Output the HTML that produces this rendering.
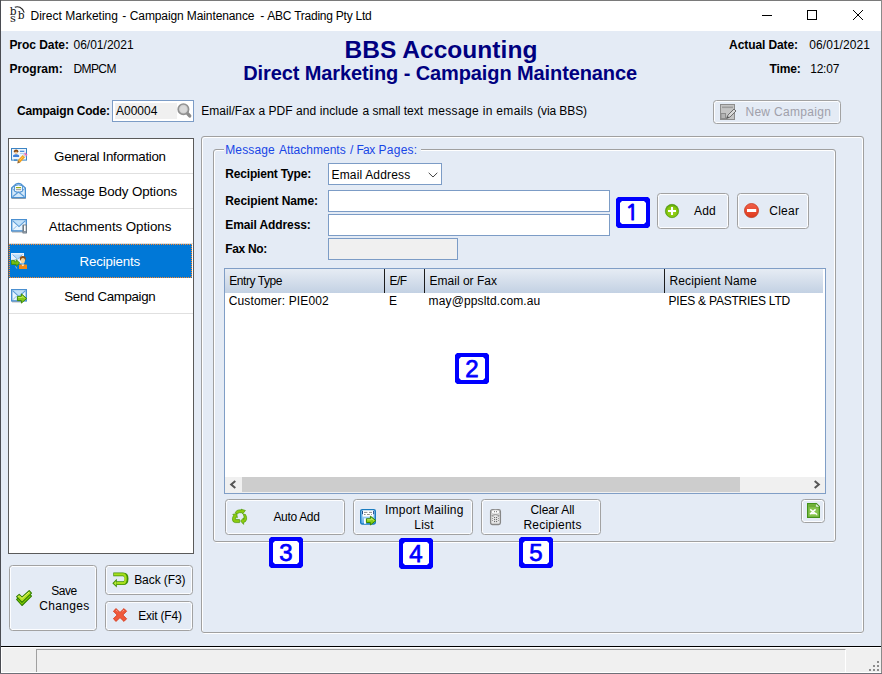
<!DOCTYPE html>
<html>
<head>
<meta charset="utf-8">
<title>Direct Marketing - Campaign Maintenance - ABC Trading Pty Ltd</title>
<style>
*{box-sizing:border-box;margin:0;padding:0}
html,body{width:882px;height:674px;overflow:hidden;background:#e4ebf5;font-family:"Liberation Sans",sans-serif;font-size:12px;color:#000}
#win{position:absolute;left:0;top:0;width:882px;height:674px;background:#e4ebf5;overflow:hidden}
.a{position:absolute}
.t{position:absolute;white-space:nowrap}
svg{position:absolute;overflow:visible}
.btn{position:absolute;border:1px solid #a2a2a2;border-radius:3.5px;background:#e4ebf5;box-shadow:inset 0 0 0 1px #fcfdff}
.inp{position:absolute;background:#fff;border:1px solid #7c9cc6}
.badge{position:absolute;width:34px;height:31px;background:#0000ff;clip-path:polygon(2px 0,32px 0,34px 2px,34px 29px,32px 31px,2px 31px,0 29px,0 2px)}
.badge i{position:absolute;left:4px;top:4px;width:26px;height:23px;background:#fff;clip-path:polygon(2px 0,24px 0,26px 2px,26px 21px,24px 23px,2px 23px,0 21px,0 2px)}
.badge b{position:absolute;left:4px;top:4px;width:26px;height:23px;text-align:center;font-size:24px;line-height:23px;color:#0000ff;font-weight:normal;-webkit-text-stroke:0.75px #0000ff}
.nav{position:absolute;left:9px;width:184px;height:34px;background:#fff;border-bottom:1px solid #e0e0e0;box-sizing:content-box}
.etch{position:absolute;border:1px solid #a0a0a0;border-radius:3px}

</style>
</head>
<body>
<div id="win">
<!-- window frame + title bar -->
<div class="a" style="left:0;top:0;width:882px;height:31px;background:#fff"></div>
<div class="a" style="left:0;top:0;width:882px;height:1px;background:#7a7a7a"></div>
<div class="a" style="left:0;top:0;width:1px;height:674px;background:#4a4c52"></div>
<div class="a" style="left:881px;top:0;width:1px;height:674px;background:#8a8a8a"></div>
<!-- app icon -->
<svg style="left:9px;top:5px" width="17" height="18" viewBox="0 0 17 18">
  <g font-family="DejaVu Serif, serif" fill="#111">
    <text x="0.8" y="9.6" font-size="10.6">b</text>
    <text x="1" y="16.8" font-size="11.4">s</text>
    <text x="8.8" y="14.1" font-size="10.6">b</text>
  </g>
  <path d="M5.8 2.3 C8.6 0.9 13.4 2 15.2 7.6" fill="none" stroke="#222" stroke-width="1.1"/>
</svg>
<!-- window controls -->
<svg style="left:0;top:0" width="882" height="31" viewBox="0 0 882 31" shape-rendering="crispEdges">
  <rect x="762" y="15" width="10" height="1" fill="#000"/>
  <rect x="807.5" y="10.5" width="9" height="9" fill="none" stroke="#000" stroke-width="1"/>
  <path d="M853 10 L863 20 M863 10 L853 20" stroke="#000" stroke-width="1" fill="none" shape-rendering="auto"/>
</svg>

<!-- campaign code input -->
<div class="inp" style="left:112px;top:100px;width:82px;height:22px"></div>
<div class="a" style="left:115px;top:103px;width:62px;height:16px;background:#f0f0f0"></div>
<svg style="left:177px;top:102px" width="16" height="18" viewBox="0 0 16 18">
  <line x1="10.6" y1="11.6" x2="12.7" y2="13.9" stroke="#8c8c8c" stroke-width="3.4" stroke-linecap="round"/>
  <circle cx="6.4" cy="7.2" r="5.2" fill="#d0d0d0" stroke="#929292" stroke-width="1.7"/>
  <circle cx="6.4" cy="7.2" r="3.2" fill="#dadada"/>
</svg>

<!-- New Campaign (disabled) -->
<div class="btn" style="left:713px;top:100px;width:128px;height:24px"></div>
<svg style="left:720px;top:104px" width="16" height="16" viewBox="0 0 16 16">
  <rect x="0.5" y="0.5" width="14" height="15" fill="#c4c4c4" stroke="#8c8c8c"/>
  <rect x="2" y="2.5" width="11" height="1.6" fill="#9c9c9c"/>
  <rect x="1" y="9.5" width="4.5" height="5" fill="#b4b4b4" stroke="#8c8c8c"/>
  <path d="M6.5 14.5 L8 11 L14 5 L16 7 L10 13 Z" fill="#d8d8d8" stroke="#6e6e6e" stroke-width="1"/>
  <path d="M6.5 14.5 L7.6 12 L9.2 13.6 Z" fill="#555"/>
</svg>

<!-- sidebar list -->
<div class="a" style="left:8px;top:138px;width:186px;height:416px;background:#fff;border:1px solid #5a5a5a"></div>
<div class="nav" style="top:139px"></div>
<div class="nav" style="top:174px"></div>
<div class="nav" style="top:209px"></div>
<div class="nav" style="top:279px"></div>
<div class="a" style="left:9px;top:244px;width:183px;height:34px;background:#0078d7"></div>
<div class="a" style="left:9px;top:244px;width:183px;height:1px;background:repeating-linear-gradient(90deg,#ff8728 0 1px,transparent 1px 2px)"></div>
<div class="a" style="left:9px;top:277px;width:183px;height:1px;background:repeating-linear-gradient(90deg,transparent 0 1px,#ff8728 1px 2px)"></div>
<div class="a" style="left:9px;top:244px;width:1px;height:34px;background:repeating-linear-gradient(180deg,#ff8728 0 1px,transparent 1px 2px)"></div>
<div class="a" style="left:191px;top:244px;width:1px;height:34px;background:repeating-linear-gradient(180deg,#ff8728 0 1px,transparent 1px 2px)"></div>

<!-- outer panel (etched) -->
<div class="etch" style="left:202px;top:137px;width:661px;height:497px;border-color:#fff"></div>
<div class="etch" style="left:201px;top:136px;width:663px;height:497px"></div>
<!-- group box -->
<div class="etch" style="left:214px;top:150px;width:621px;height:393px;border-color:#fff"></div>
<div class="etch" style="left:213px;top:149px;width:623px;height:393px"></div>
<div class="a" style="left:224px;top:146px;width:197px;height:8px;background:#e4ebf5"></div>

<!-- form fields -->
<div class="inp" style="left:328px;top:163px;width:114px;height:22px"></div>
<svg style="left:428px;top:172px" width="10" height="6" viewBox="0 0 10 6"><path d="M0.7 0.8 L5 5 L9.3 0.8" fill="none" stroke="#444" stroke-width="1"/></svg>
<div class="inp" style="left:328px;top:190px;width:282px;height:22px"></div>
<div class="inp" style="left:328px;top:214px;width:282px;height:22px"></div>
<div class="inp" style="left:328px;top:238px;width:130px;height:22px;background:#f0f0f0"></div>

<!-- badge 1 + Add / Clear -->
<div class="badge" style="left:616px;top:197px"><i></i><b style="font-family:NanumGothic,'Liberation Sans',sans-serif;font-size:22px;-webkit-text-stroke:1.1px #0000ff;top:4px;left:3px">1</b></div>
<div class="btn" style="left:657px;top:193px;width:72px;height:36px"></div>
<div class="btn" style="left:737px;top:193px;width:72px;height:36px"></div>

<!-- grid -->
<div class="a" style="left:224px;top:268px;width:602px;height:226px;background:#fff;border:1px solid #809ec6"></div>
<div class="a" style="left:225px;top:269px;width:598px;height:24px;background:linear-gradient(#e6ecf4,#c3d1e3)"></div>
<div class="a" style="left:384px;top:269px;width:1px;height:24px;background:#1c1c1c"></div>
<div class="a" style="left:424px;top:269px;width:1px;height:24px;background:#1c1c1c"></div>
<div class="a" style="left:664px;top:269px;width:1px;height:24px;background:#1c1c1c"></div>
<!-- scrollbar -->
<div class="a" style="left:225px;top:477px;width:600px;height:16px;background:#f0f0f0"></div>
<div class="a" style="left:242px;top:477px;width:498px;height:15px;background:#cdcdcd"></div>
<svg style="left:229px;top:480px" width="8" height="9" viewBox="0 0 8 9"><path d="M6.3 1 L2.2 4.5 L6.3 8" fill="none" stroke="#555" stroke-width="2"/></svg>
<svg style="left:813px;top:480px" width="8" height="9" viewBox="0 0 8 9"><path d="M1.7 1 L5.8 4.5 L1.7 8" fill="none" stroke="#555" stroke-width="2"/></svg>

<div class="badge" style="left:455px;top:353px"><i></i><b>2</b></div>

<!-- bottom buttons -->
<div class="btn" style="left:225px;top:499px;width:120px;height:36px"></div>
<div class="btn" style="left:353px;top:499px;width:120px;height:36px"></div>
<div class="btn" style="left:481px;top:499px;width:120px;height:36px"></div>
<div class="btn" style="left:801px;top:499px;width:24px;height:24px"></div>

<div class="badge" style="left:269px;top:537px"><i></i><b>3</b></div>
<div class="badge" style="left:399px;top:538px"><i></i><b>4</b></div>
<div class="badge" style="left:519px;top:537px"><i></i><b>5</b></div>

<!-- bottom-left buttons -->
<div class="btn" style="left:9px;top:565px;width:88px;height:66px"></div>
<div class="btn" style="left:105px;top:565px;width:88px;height:30px"></div>
<div class="btn" style="left:105px;top:601px;width:88px;height:30px"></div>

<!-- status bar -->
<div class="a" style="left:1px;top:646px;width:880px;height:1px;background:#000"></div>
<div class="a" style="left:1px;top:647px;width:880px;height:26px;background:#f0f0f0;border-top:1px solid #fff;border-left:1px solid #fff;border-bottom:1px solid #fff"></div>
<div class="a" style="left:36px;top:649px;width:810px;height:23px;border-top:1px solid #a0a0a0;border-left:1px solid #a0a0a0;border-right:1px solid #fff"></div>
<div class="a" style="left:0;top:673px;width:882px;height:1px;background:#6e7078"></div>
<svg style="left:868px;top:660px" width="12" height="12" viewBox="0 0 12 12" shape-rendering="crispEdges">
  <g fill="#8c8c8c"><rect x="9" y="1" width="2" height="2"/><rect x="5" y="5" width="2" height="2"/><rect x="9" y="5" width="2" height="2"/><rect x="1" y="9" width="2" height="2"/><rect x="5" y="9" width="2" height="2"/><rect x="9" y="9" width="2" height="2"/></g>
</svg>

<!-- ===== icons ===== -->
<!-- nav 1: id card + pencil -->
<svg style="left:11px;top:148px" width="16" height="16" viewBox="0 0 16 16">
  <rect x="0.5" y="0.5" width="15" height="11.6" fill="#edf5fc" stroke="#3c84c4"/>
  <rect x="3" y="11.4" width="3.2" height="1.4" fill="#3c84c4"/>
  <ellipse cx="5.1" cy="3.3" rx="2.2" ry="1.7" fill="#8a4a12"/>
  <ellipse cx="5.1" cy="4.9" rx="1.3" ry="1.5" fill="#f3cb9c"/>
  <path d="M2.1 9 V7.2 Q5.1 5.4 8.1 7.2 V9 Z" fill="#3f7fd8"/>
  <rect x="9" y="2.7" width="4.3" height="1.3" fill="#4a8fdc"/>
  <rect x="9" y="5" width="4.3" height="1" fill="#b4d4f2"/>
  <line x1="8" y1="13.4" x2="12.9" y2="8.2" stroke="#f5a21c" stroke-width="3.3"/>
  <line x1="8.6" y1="12.4" x2="12.3" y2="8.5" stroke="#fcc65a" stroke-width="1"/>
  <path d="M6.3 15.6 L6.9 12.3 L9.3 14.6 Z" fill="#9a6a30"/>
  <line x1="12.9" y1="8.2" x2="14.2" y2="6.8" stroke="#cfd3d8" stroke-width="3.3"/>
  <line x1="14.2" y1="6.8" x2="15.3" y2="5.6" stroke="#e66cc0" stroke-width="3.3"/>
</svg>
<!-- nav 2: open envelope -->
<svg style="left:11px;top:183px" width="15" height="16" viewBox="0 0 15 16">
  <rect x="0.6" y="15" width="14.2" height="1" fill="#a3a3a3"/>
  <path d="M0.6 5 L5 1 Q7.5 -0.3 10 1 L14.4 5 V14.6 H0.6 Z" fill="#d4e9fa" stroke="#4a8fd0" stroke-width="1.2"/>
  <path d="M3.6 2.6 Q7.5 1.2 11.4 2.6 V8.4 Q7.5 10.2 3.6 8.4 Z" fill="#fff" stroke="#4a8fd0" stroke-width="1"/>
  <rect x="5" y="4.1" width="5" height="1.1" fill="#8aa400"/>
  <rect x="5" y="6.1" width="5" height="1.1" fill="#9a9a9a"/>
  <path d="M1.2 5.6 L5.6 9.6 M13.8 5.6 L9.4 9.6" stroke="#5a9ad6" stroke-width="1" fill="none"/>
  <path d="M1.6 13.8 L7.5 9 L13.4 13.8" stroke="#5a9ad6" stroke-width="1.1" fill="none"/>
</svg>
<!-- nav 3: envelope + clip -->
<svg style="left:11px;top:219px" width="16" height="15" viewBox="0 0 16 15">
  <rect x="1" y="12.2" width="11" height="1.3" fill="#a8a8a8"/>
  <rect x="0.7" y="0.7" width="14.6" height="11.2" fill="#e8f4fe" stroke="#4a8fd0" stroke-width="1.4"/>
  <path d="M1.8 1.6 H14.2 L8 7.4 Z" fill="#bfe0fa"/>
  <path d="M1.8 1.8 L8 7.6 L14.2 1.8" stroke="#5a9ad6" stroke-width="1.1" fill="none"/>
  <path d="M1.8 10.8 L5.6 7 " stroke="#8cbce8" stroke-width="1" fill="none"/>
  <rect x="11.4" y="5.4" width="4.6" height="9.2" rx="1.2" fill="#6f7c88"/>
  <rect x="13" y="6.4" width="1.7" height="5.6" fill="#fff"/>
  <rect x="12.4" y="12.6" width="2.6" height="0.9" fill="#aeb6be"/>
</svg>
<!-- nav 4: recipients -->
<svg style="left:11px;top:253px" width="17" height="16" viewBox="0 0 17 16">
  <rect x="0.5" y="0.5" width="12" height="9.5" fill="#e4f1fc" stroke="#e8f0fa"/>
  <path d="M1.5 1.5 H11.5 L6.5 6 Z" fill="#b8dcfa"/>
  <path d="M1.5 1.5 L6.5 6.2 L11.5 1.5" stroke="#7fb0e4" stroke-width="1" fill="none"/>
  <path d="M1.5 9 L4.5 6" stroke="#a8cdf0" stroke-width="1" fill="none"/>
  <path d="M0.4 7.4 H3.4 V8.8 H5.2 V6.6 L8.6 10 L5.2 13.4 V11.4 H0.4 Z" fill="#78c010" stroke="#3a8a08" stroke-width="0.9"/>
  <path d="M4.6 13.2 L5.8 15.6" stroke="#b8c8d8" stroke-width="0.8"/>
  <ellipse cx="11.8" cy="5.6" rx="3" ry="2.6" fill="#8c4c10"/>
  <ellipse cx="11.9" cy="7.6" rx="2.1" ry="2.7" fill="#f2d29c"/>
  <path d="M8 16 V12 Q8 11.4 8.8 11.4 H15.2 Q16 11.4 16 12 V16 Z" fill="#f08a18"/>
  <path d="M10.4 11.4 L11.9 13.2 L13.4 11.4 Z" fill="#fff"/>
</svg>
<!-- nav 5: send -->
<svg style="left:11px;top:289px" width="16" height="15" viewBox="0 0 16 15">
  <rect x="1" y="12.2" width="10" height="1.2" fill="#a8a8a8"/>
  <rect x="0.7" y="0.7" width="14.6" height="11.2" fill="#e8f4fe" stroke="#4a8fd0" stroke-width="1.4"/>
  <path d="M1.8 1.6 H14.2 L8 7.4 Z" fill="#bfe0fa"/>
  <path d="M1.8 1.8 L8 7.6 L14.2 1.8" stroke="#5a9ad6" stroke-width="1.1" fill="none"/>
  <path d="M1.8 10.8 L5.6 7" stroke="#8cbce8" stroke-width="1" fill="none"/>
  <path d="M6.4 7.4 H10.4 V4.9 L15.7 9.5 L10.4 14.1 V11.6 H6.4 Z" fill="#84c818" stroke="#3e8c08" stroke-width="1" stroke-linejoin="round"/>
  <path d="M7.2 8.4 H11.3 V7.2 L13.6 9.2" stroke="#c8f060" stroke-width="0.9" fill="none"/>
</svg>

<!-- Add: green plus -->
<svg style="left:665px;top:204px" width="14" height="14" viewBox="0 0 14 14">
  <defs><radialGradient id="gadd" cx="0.5" cy="0.55" r="0.55"><stop offset="0" stop-color="#a4dc18"/><stop offset="0.7" stop-color="#84c410"/><stop offset="1" stop-color="#4c9808"/></radialGradient></defs>
  <circle cx="7" cy="7" r="6.7" fill="url(#gadd)" stroke="#4a960a" stroke-width="0.6"/>
  <rect x="3" y="6" width="8" height="2" fill="#fff"/>
  <rect x="6" y="3" width="2" height="8" fill="#fff"/>
</svg>
<!-- Clear: red minus -->
<svg style="left:744px;top:203px" width="15" height="16" viewBox="0 0 15 16">
  <defs><linearGradient id="gclr" x1="0" y1="0" x2="0" y2="1"><stop offset="0" stop-color="#f0604a"/><stop offset="1" stop-color="#e03a1c"/></linearGradient></defs>
  <ellipse cx="7.5" cy="8.3" rx="7" ry="7" fill="#9aa0a8" opacity="0.5"/>
  <circle cx="7.5" cy="7.5" r="7" fill="url(#gclr)" stroke="#c83a20" stroke-width="0.8"/>
  <rect x="3" y="6" width="9.2" height="3" fill="#fff"/>
</svg>

<!-- Auto Add: recycle -->
<svg style="left:232px;top:509px" width="15" height="16" viewBox="0 0 15 16">
  <g fill="#8ccc10" stroke="#4e9a08" stroke-width="0.7" stroke-linejoin="round">
    <path d="M3.2 3.4 Q4.4 0.6 7 0.6 H9.6 L9 -0.1 L13.4 1.2 L10.6 4.6 L10.2 3.4 H7.4 Q6 3.4 5.4 4.8 Z" transform="translate(0 0.3)"/>
    <path d="M0.8 5.4 L4.6 4.6 L5.4 8.6 L4.2 8 Q3.4 9.6 3.6 10.6 H7.6 V13.6 H3.2 Q0.2 13.2 0.4 9.8 Q0.6 8 1.6 6.4 Z"/>
    <path d="M11.2 5 L13.6 5.6 Q15 8.4 14.6 10.4 Q14 13 11.6 13.4 V15.4 L8.6 12 L11.6 8.8 V10.6 Q12.2 10.2 12.2 9 Q12.2 7.4 11.2 5 Z"/>
  </g>
</svg>
<!-- Import: floppy + arrow -->
<svg style="left:360px;top:509px" width="16" height="16" viewBox="0 0 16 16">
  <defs><linearGradient id="gflp" x1="0" y1="0" x2="0" y2="1"><stop offset="0" stop-color="#cfeafd"/><stop offset="1" stop-color="#62aeec"/></linearGradient></defs>
  <rect x="0.7" y="0.7" width="14.6" height="14.3" rx="1.4" fill="url(#gflp)" stroke="#1a7cc0" stroke-width="1.4"/>
  <rect x="2.8" y="1.4" width="10.6" height="6.2" fill="#fff"/>
  <rect x="2" y="2" width="0.9" height="3.2" fill="#0a3a80"/>
  <rect x="13.2" y="2" width="0.9" height="3.2" fill="#0a3a80"/>
  <path d="M4 3.4 H7.4 M9 3.4 H12 M4 5.5 H5.6 M7 5.5 H9.8 M11.2 5.5 H12" stroke="#8c8c8c" stroke-width="1"/>
  <rect x="4" y="9.4" width="2.2" height="5.4" fill="#fff"/>
  <path d="M6.4 9.8 H10.4 V7.2 L15.9 11.6 L10.4 16 V13.5 H6.4 Z" fill="#86cc14" stroke="#3a8800" stroke-width="1" stroke-linejoin="round"/>
  <path d="M7.2 10.8 H11.3 V9.4 L13.8 11.4" stroke="#d0f470" stroke-width="0.9" fill="none"/>
</svg>
<!-- Clear all: trash -->
<svg style="left:490px;top:509px" width="11" height="16" viewBox="0 0 11 16">
  <rect x="0.6" y="0.7" width="9.8" height="14.8" rx="1.8" fill="#e6e6e6" stroke="#878787" stroke-width="1.3"/>
  <ellipse cx="5.5" cy="3" rx="4.2" ry="2.2" fill="#fafafa" stroke="#9c9c9c" stroke-width="0.6"/>
  <path d="M1.6 6.6 Q5.5 4.6 9.4 6.6" fill="none" stroke="#8a8a8a" stroke-width="0.9"/>
  <g fill="#6e6e6e">
    <rect x="4" y="2.2" width="1" height="1"/><rect x="6" y="2.2" width="1" height="1"/>
    <rect x="4" y="8" width="1.1" height="1.1"/><rect x="6" y="8" width="1.1" height="1.1"/>
    <rect x="4" y="10" width="1.1" height="1.1"/><rect x="6" y="10" width="1.1" height="1.1"/>
    <rect x="4" y="12" width="1.1" height="1.1"/><rect x="6" y="12" width="1.1" height="1.1"/>
  </g>
  <g fill="#9a9a9a">
    <rect x="2" y="9" width="1" height="1"/><rect x="8" y="9" width="1" height="1"/>
    <rect x="2" y="11" width="1" height="1"/><rect x="8" y="11" width="1" height="1"/>
    <rect x="2.4" y="7" width="1" height="1"/><rect x="7.8" y="7" width="1" height="1"/>
  </g>
</svg>
<!-- Excel -->
<svg style="left:807px;top:503px" width="13" height="15" viewBox="0 0 13 15">
  <path d="M0.6 0.6 H9.4 L12.4 3.6 V14.4 H0.6 Z" fill="#86c44e" stroke="#43921a" stroke-width="1.2"/>
  <rect x="1.6" y="1.6" width="6.6" height="2.6" fill="#6eae38"/>
  <path d="M8.8 0.4 V4 H12.6 Z" fill="#fff" stroke="#3a8a10" stroke-width="0.5"/>
  <path d="M3.2 6.4 L9 11 M8.6 6.4 L3 11" stroke="#fff" stroke-width="1.5"/>
  <path d="M3 10.6 H8 M8.6 10.2 L10 11.6 M9.4 11.8 H10.2" stroke="#fff" stroke-width="1.1"/>
</svg>

<!-- Save: check -->
<svg style="left:16px;top:590px" width="16" height="16" viewBox="0 0 16 16">
  <path d="M0.6 9.4 L3.2 7.2 L6 10 L13.2 3.6 L15.5 6.2 L6 15.5 Z" fill="#86d000" stroke="#2f7d00" stroke-width="1.1" stroke-linejoin="round"/>
  <path d="M0.6 6.6 L3.2 4.4 L6 7.2 L13.2 0.6 L15.5 3.2 L6 12.4 Z" fill="#b2e020" stroke="#2f7d00" stroke-width="1.1" stroke-linejoin="round"/>
  <path d="M1.8 6.6 L3.2 5.6 L6 8.4 L13.2 2 " fill="none" stroke="#e8f870" stroke-width="0.9"/>
</svg>
<!-- Back: u-turn -->
<svg style="left:112px;top:572px" width="16" height="16" viewBox="0 0 16 16">
  <path d="M1.3 2.4 H11 Q14.6 2.4 14.6 6.8 Q14.6 11.2 11 11.2 H4.6" fill="none" stroke="#3e8e04" stroke-width="3.8" stroke-linejoin="round"/>
  <path d="M0.3 11.2 L4.8 6.8 V15.4 Z" fill="#3e8e04"/>
  <path d="M1.9 2.4 H11 Q13.6 2.4 13.6 6.8 Q13.6 11.2 11 11.2 H4.4" fill="none" stroke="#a6de1c" stroke-width="2.3" />
  <path d="M1.7 11.2 L4 9 V13.4 Z" fill="#b6e838"/>
</svg>
<!-- Exit: X -->
<svg style="left:113px;top:608px" width="14" height="14" viewBox="0 0 14 14">
  <path d="M3 0.6 L7 4.4 L11 0.6 L13.6 3.2 L9.8 7 L13.6 10.8 L11 13.4 L7 9.6 L3 13.4 L0.4 10.8 L4.2 7 L0.4 3.2 Z" fill="#f05a3c" stroke="#d63a1a" stroke-width="0.9" stroke-linejoin="round"/>
  <path d="M3 2 L4.6 3.4 M11 2 L9.6 3.4" stroke="#f8a08c" stroke-width="1"/>
</svg>

<!-- text labels -->
<div class="t" style="left:30.50px;top:9px;font-size:12px;line-height:15px;color:#000;letter-spacing:0.008px">Direct Marketing</div>
<div class="t" style="left:122.30px;top:9px;font-size:12px;line-height:15px;color:#000;letter-spacing:0.000px">-</div>
<div class="t" style="left:129.80px;top:9px;font-size:12px;line-height:15px;color:#000;letter-spacing:-0.109px">Campaign Maintenance</div>
<div class="t" style="left:260.30px;top:9px;font-size:12px;line-height:15px;color:#000;letter-spacing:0.000px">-</div>
<div class="t" style="left:267.30px;top:9px;font-size:12px;line-height:15px;color:#000;letter-spacing:-0.237px">ABC Trading Pty Ltd</div>
<div class="t" style="left:9.40px;top:38px;font-size:12px;line-height:15px;color:#000;letter-spacing:-0.047px;font-weight:bold">Proc Date:</div>
<div class="t" style="left:73.50px;top:38px;font-size:12px;line-height:15px;color:#000;letter-spacing:0.002px">06/01/2021</div>
<div class="t" style="left:9.40px;top:62px;font-size:12px;line-height:15px;color:#000;letter-spacing:-0.007px;font-weight:bold">Program:</div>
<div class="t" style="left:73.50px;top:62px;font-size:12px;line-height:15px;color:#000;letter-spacing:-0.600px">DMPCM</div>
<div class="t" style="left:344.50px;top:34px;font-size:24.5px;line-height:31px;color:#000080;letter-spacing:0.038px;font-weight:bold">BBS Accounting</div>
<div class="t" style="left:243.20px;top:61px;font-size:20px;line-height:25px;color:#000080;letter-spacing:-0.104px;font-weight:bold">Direct Marketing - Campaign Maintenance</div>
<div class="t" style="left:729.10px;top:38px;font-size:12px;line-height:15px;color:#000;letter-spacing:-0.093px;font-weight:bold">Actual Date:</div>
<div class="t" style="left:809.30px;top:38px;font-size:12px;line-height:15px;color:#000;letter-spacing:0.057px">06/01/2021</div>
<div class="t" style="left:769.40px;top:62px;font-size:12px;line-height:15px;color:#000;letter-spacing:-0.098px;font-weight:bold">Time:</div>
<div class="t" style="left:810.20px;top:62px;font-size:12px;line-height:15px;color:#000;letter-spacing:-0.214px">12:07</div>
<div class="t" style="left:17.00px;top:104px;font-size:12px;line-height:15px;color:#000;letter-spacing:-0.180px;font-weight:bold">Campaign Code:</div>
<div class="t" style="left:116.00px;top:104px;font-size:12px;line-height:15px;color:#000;letter-spacing:0.000px">A00004</div>
<div class="t" style="left:201.20px;top:104px;font-size:12px;line-height:15px;color:#000;letter-spacing:0.057px">Email/Fax a PDF and include</div>
<div class="t" style="left:362.60px;top:104px;font-size:12px;line-height:15px;color:#000;letter-spacing:-0.023px">a small text</div>
<div class="t" style="left:427.90px;top:104px;font-size:12px;line-height:15px;color:#000;letter-spacing:0.339px">message in emails</div>
<div class="t" style="left:537.20px;top:104px;font-size:12px;line-height:15px;color:#000;letter-spacing:-0.098px">(via BBS)</div>
<div class="t" style="left:745.40px;top:105px;font-size:12px;line-height:15px;color:#a0a0aa;letter-spacing:0.322px">New Campaign</div>
<div class="t" style="left:54.10px;top:148px;font-size:13.33px;line-height:17px;color:#000;letter-spacing:-0.332px">General Information</div>
<div class="t" style="left:41.50px;top:183px;font-size:13.33px;line-height:17px;color:#000;letter-spacing:-0.112px">Message Body Options</div>
<div class="t" style="left:48.70px;top:218px;font-size:13.33px;line-height:17px;color:#000;letter-spacing:-0.058px">Attachments Options</div>
<div class="t" style="left:79.50px;top:253px;font-size:13.33px;line-height:17px;color:#fff;letter-spacing:-0.185px">Recipients</div>
<div class="t" style="left:64.30px;top:288px;font-size:13.33px;line-height:17px;color:#000;letter-spacing:-0.347px">Send Campaign</div>
<div class="t" style="left:225.20px;top:143px;font-size:12px;line-height:15px;color:#1846e6;letter-spacing:0.147px">Message</div>
<div class="t" style="left:278.90px;top:143px;font-size:12px;line-height:15px;color:#1846e6;letter-spacing:0.010px">Attachments</div>
<div class="t" style="left:350.00px;top:143px;font-size:12px;line-height:15px;color:#1846e6;letter-spacing:0.000px">/</div>
<div class="t" style="left:356.40px;top:143px;font-size:12px;line-height:15px;color:#1846e6;letter-spacing:-0.600px">Fax</div>
<div class="t" style="left:378.60px;top:143px;font-size:12px;line-height:15px;color:#1846e6;letter-spacing:0.235px">Pages:</div>
<div class="t" style="left:225.30px;top:167px;font-size:12px;line-height:15px;color:#000;letter-spacing:-0.183px;font-weight:bold">Recipient Type:</div>
<div class="t" style="left:331.50px;top:168px;font-size:12px;line-height:15px;color:#000;letter-spacing:0.170px">Email Address</div>
<div class="t" style="left:225.30px;top:194px;font-size:12px;line-height:15px;color:#000;letter-spacing:-0.095px;font-weight:bold">Recipient Name:</div>
<div class="t" style="left:225.30px;top:218px;font-size:12px;line-height:15px;color:#000;letter-spacing:-0.113px;font-weight:bold">Email Address:</div>
<div class="t" style="left:225.30px;top:242px;font-size:12px;line-height:15px;color:#000;letter-spacing:-0.351px;font-weight:bold">Fax No:</div>
<div class="t" style="left:694.10px;top:204px;font-size:12px;line-height:15px;color:#000;letter-spacing:0.111px">Add</div>
<div class="t" style="left:769.20px;top:204px;font-size:12px;line-height:15px;color:#000;letter-spacing:0.280px">Clear</div>
<div class="t" style="left:229.20px;top:274px;font-size:12px;line-height:15px;color:#000;letter-spacing:-0.420px">Entry Type</div>
<div class="t" style="left:389.60px;top:274px;font-size:12px;line-height:15px;color:#000;letter-spacing:-0.600px">E/F</div>
<div class="t" style="left:429.50px;top:274px;font-size:12px;line-height:15px;color:#000;letter-spacing:0.014px">Email or Fax</div>
<div class="t" style="left:669.50px;top:274px;font-size:12px;line-height:15px;color:#000;letter-spacing:0.139px">Recipient Name</div>
<div class="t" style="left:228.70px;top:294px;font-size:12px;line-height:15px;color:#000;letter-spacing:0.129px">Customer: PIE002</div>
<div class="t" style="left:389.10px;top:294px;font-size:12px;line-height:15px;color:#000;letter-spacing:0.000px">E</div>
<div class="t" style="left:428.60px;top:294px;font-size:12px;line-height:15px;color:#000;letter-spacing:0.132px">may@ppsltd.com.au</div>
<div class="t" style="left:668.50px;top:294px;font-size:12px;line-height:15px;color:#000;letter-spacing:-0.218px">PIES &amp; PASTRIES LTD</div>
<div class="t" style="left:273.40px;top:510px;font-size:12px;line-height:15px;color:#000;letter-spacing:-0.314px">Auto Add</div>
<div class="t" style="left:385.00px;top:503px;font-size:12px;line-height:15px;color:#000;letter-spacing:0.232px">Import Mailing</div>
<div class="t" style="left:414.30px;top:518px;font-size:12px;line-height:15px;color:#000;letter-spacing:0.187px">List</div>
<div class="t" style="left:530.50px;top:503px;font-size:12px;line-height:15px;color:#000;letter-spacing:-0.085px">Clear All</div>
<div class="t" style="left:523.50px;top:518px;font-size:12px;line-height:15px;color:#000;letter-spacing:0.208px">Recipients</div>
<div class="t" style="left:51.20px;top:584px;font-size:12px;line-height:15px;color:#000;letter-spacing:-0.459px">Save</div>
<div class="t" style="left:39.30px;top:599px;font-size:12px;line-height:15px;color:#000;letter-spacing:0.311px">Changes</div>
<div class="t" style="left:134.20px;top:573px;font-size:12px;line-height:15px;color:#000;letter-spacing:-0.076px">Back (F3)</div>
<div class="t" style="left:138.20px;top:609px;font-size:12px;line-height:15px;color:#000;letter-spacing:-0.205px">Exit (F4)</div>
</div>
</body>
</html>
